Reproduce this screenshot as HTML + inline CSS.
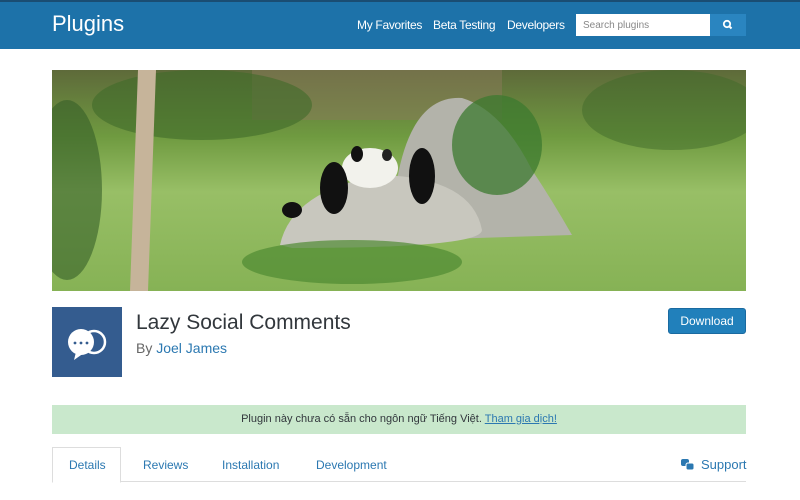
<!DOCTYPE html>
<html><head><meta charset="utf-8"><style>
*{margin:0;padding:0;box-sizing:border-box}
body{width:800px;height:500px;overflow:hidden;background:#fff;font-family:"Liberation Sans",sans-serif;position:relative;color:#32373c}
.hdr{position:absolute;left:0;top:0;width:800px;height:49px;background:#1d72a9;border-top:2px solid #1a4d73}
.hdr .t{position:absolute;left:52px;top:9px;color:#fff;font-size:22px}
.nav{position:absolute;top:16px;color:#fff;font-size:12px;letter-spacing:-0.3px}
.srch{position:absolute;left:576px;top:14px;width:134px;height:22px;background:#fff;font-size:10px;color:#888;padding:6px 7px}
.sbtn{position:absolute;left:710px;top:14px;width:36px;height:22px;background:#2a85c0}
.ban{position:absolute;left:52px;top:70px;width:694px;height:221px}
.icon{position:absolute;left:52px;top:307px;width:70px;height:70px;background:#345c8f}
.title{position:absolute;left:136px;top:311px;font-size:21px;color:#32373c}
.by{position:absolute;left:136px;top:340px;font-size:14px;color:#666}
.by a{color:#2b78b1}
.dl{position:absolute;left:668px;top:308px;width:78px;height:26px;background:#2180bb;border:1px solid #1a6aa0;border-radius:3px;color:#fff;font-size:12px;text-align:center;line-height:24px}
.note{position:absolute;left:52px;top:405px;width:694px;height:29px;background:#c9e8cc;font-size:11px;color:#32373c;text-align:center;line-height:29px}
.note a{color:#2b78b1;text-decoration:underline}
.tabs{position:absolute;left:52px;top:481px;width:694px;border-top:1px solid #ddd}
.tab{position:absolute;top:458px;font-size:12px;color:#2b78b1}
.tabon{position:absolute;left:52px;top:447px;width:69px;height:36px;border:1px solid #ddd;border-bottom:1px solid #fff;background:#fff}
</style></head><body>
<div class="hdr"><div class="t">Plugins</div>
<div class="nav" style="left:357px">My Favorites</div>
<div class="nav" style="left:433px">Beta Testing</div>
<div class="nav" style="left:507px">Developers</div>
</div>
<div class="srch">Search plugins</div>
<div class="sbtn"><svg width="36" height="22"><circle cx="17" cy="10" r="3.2" fill="none" stroke="#fff" stroke-width="1.8"/><line x1="19.3" y1="12.3" x2="21.5" y2="14.5" stroke="#fff" stroke-width="2"/></svg></div>
<svg class="ban" viewBox="0 0 694 221" preserveAspectRatio="none">
<defs><linearGradient id="g" x1="0" y1="0" x2="0" y2="1"><stop offset="0" stop-color="#5e6a3a"/><stop offset=".3" stop-color="#6f9a40"/><stop offset=".55" stop-color="#98bf66"/><stop offset="1" stop-color="#86b255"/></linearGradient></defs>
<rect width="694" height="221" fill="url(#g)"/>
<rect x="200" y="0" width="250" height="50" fill="#8a7a5a" opacity=".5"/>
<ellipse cx="150" cy="35" rx="110" ry="35" fill="#3f6a2a" opacity=".6"/>
<ellipse cx="620" cy="40" rx="90" ry="40" fill="#3f6a2a" opacity=".5"/>
<ellipse cx="15" cy="120" rx="35" ry="90" fill="#355f28" opacity=".6"/>
<path d="M345 110 Q360 25 410 28 Q450 40 480 100 Q500 130 520 165 L360 170 Z" fill="#b3b3aa"/>
<ellipse cx="445" cy="75" rx="45" ry="50" fill="#3c7a2f" opacity=".75"/>
<path d="M228 175 Q240 120 330 105 Q420 108 430 160 Q430 178 240 178 Z" fill="#c8c7be"/>
<ellipse cx="318" cy="98" rx="28" ry="20" fill="#f2f2ec"/>
<ellipse cx="282" cy="118" rx="14" ry="26" fill="#111"/>
<ellipse cx="370" cy="106" rx="13" ry="28" fill="#111"/>
<ellipse cx="305" cy="84" rx="6" ry="8" fill="#111"/>
<ellipse cx="335" cy="85" rx="5" ry="6" fill="#222"/>
<ellipse cx="240" cy="140" rx="10" ry="8" fill="#111"/>
<ellipse cx="300" cy="192" rx="110" ry="22" fill="#4f8a32" opacity=".7"/>
<path d="M86 0 L104 0 L96 221 L78 221 Z" fill="#c6b49a"/>
</svg>
<div class="icon"><svg width="70" height="70"><circle cx="42" cy="35" r="11" fill="none" stroke="#fff" stroke-width="2.5"/><circle cx="29" cy="35" r="13" fill="#fff"/><path d="M24 45 L22 53 L32 46Z" fill="#fff"/><circle cx="23" cy="36" r="1.4" fill="#345c8f"/><circle cx="29" cy="36" r="1.4" fill="#345c8f"/><circle cx="35" cy="36" r="1.4" fill="#345c8f"/></svg></div>
<div class="title">Lazy Social Comments</div>
<div class="by">By <a>Joel James</a></div>
<div class="dl">Download</div>
<div class="note">Plugin này chưa có sẵn cho ngôn ngữ Tiếng Việt. <a>Tham gia dịch!</a></div>
<div class="tabs"></div>
<div class="tabon"></div>
<div class="tab" style="left:69px">Details</div>
<div class="tab" style="left:143px">Reviews</div>
<div class="tab" style="left:222px">Installation</div>
<div class="tab" style="left:316px">Development</div>
<svg style="position:absolute;left:681px;top:459px" width="14" height="12"><rect x="0" y="0" width="8" height="7" rx="2" fill="#2b78b1"/><rect x="5" y="4" width="8" height="7" rx="2" fill="#2b78b1" stroke="#fff" stroke-width="1"/></svg>
<div class="tab" style="left:701px;font-size:13px;top:457px">Support</div>
</body></html>
